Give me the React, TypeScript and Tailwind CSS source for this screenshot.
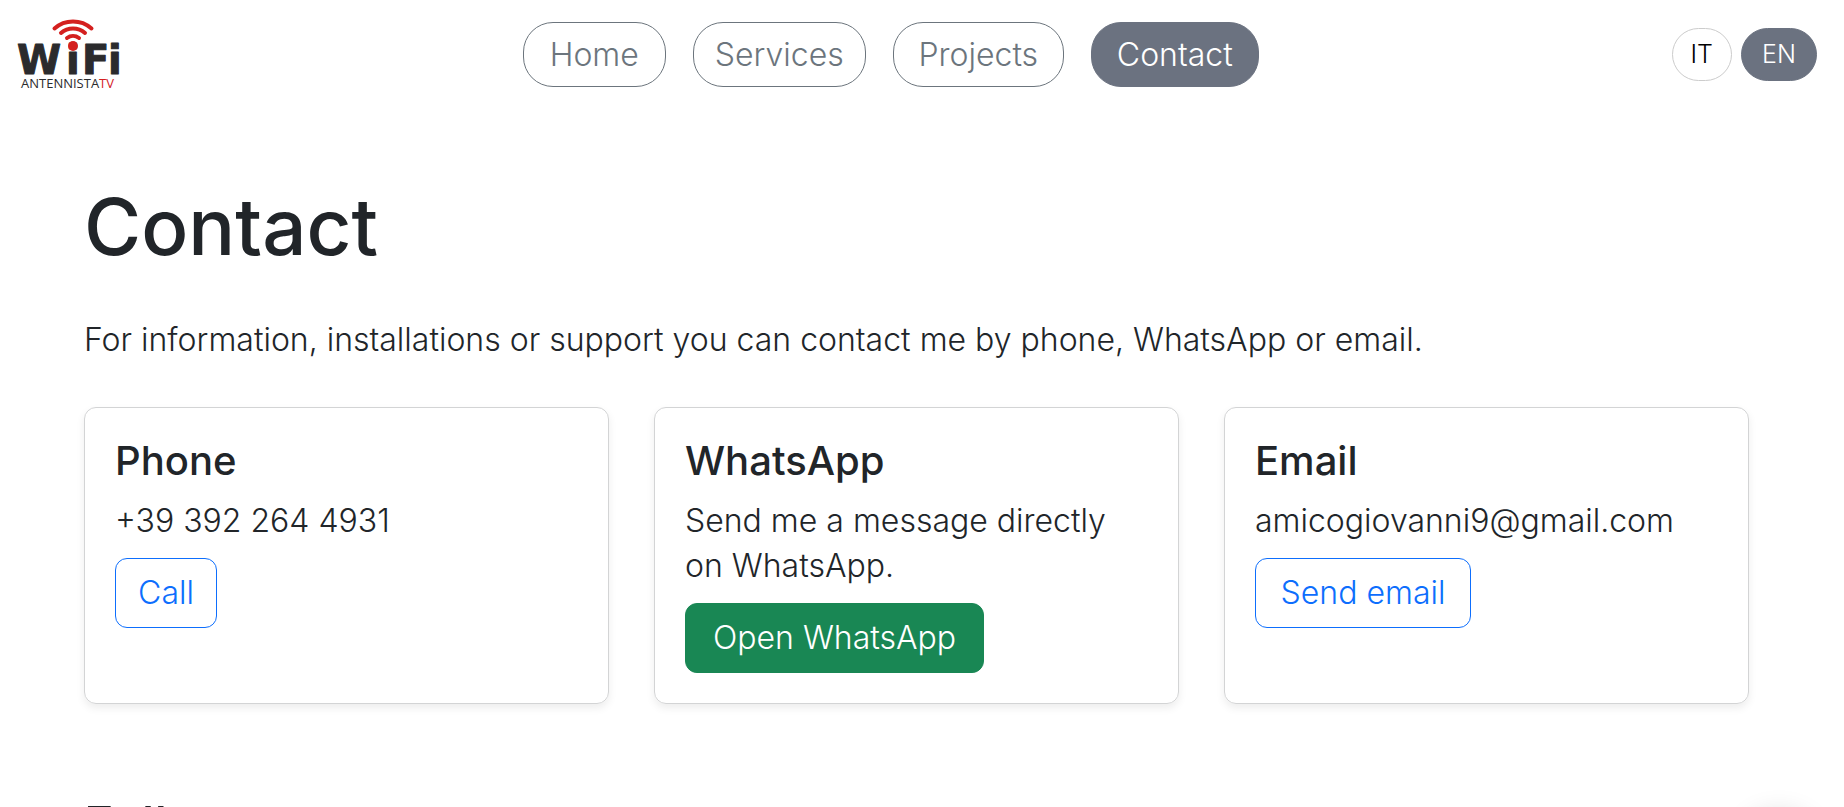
import React, { useState } from 'react';
import clsx from 'clsx';

interface ContactCard {
  title: string;
  text: string;
  action: string;
  href: string;
  buttonClass: string;
}

const navItems = [
  { label: 'Home', width: 'min-w-[143px]' },
  { label: 'Services', width: 'min-w-[173px]' },
  { label: 'Projects', width: 'min-w-[171px]' },
  { label: 'Contact', width: 'min-w-[168px]' }
];

const cards: ContactCard[] = [
  {
    title: 'Phone',
    text: '+39 392 264 4931',
    action: 'Call',
    href: 'tel:+393922644931',
    buttonClass: 'min-w-[102px] border-[#0d6efd] text-[#0d6efd]'
  },
  {
    title: 'WhatsApp',
    text: 'Send me a message directly on WhatsApp.',
    action: 'Open WhatsApp',
    href: 'https://wa.me/393922644931',
    buttonClass: 'min-w-[299px] border-[#198754] bg-[#198754] text-white'
  },
  {
    title: 'Email',
    text: 'amicogiovanni9@gmail.com',
    action: 'Send email',
    href: 'mailto:amicogiovanni9@gmail.com',
    buttonClass: 'min-w-[216px] border-[#0d6efd] text-[#0d6efd]'
  }
];

const Logo = () => (
  <svg viewBox="0 0 104 75" className="w-[104px] h-[75px]" role="img" aria-label="WiFi AntennistaTV">
    <g fill="none" stroke="#d4201f" strokeWidth="4" strokeLinecap="round">
      <path d="M38.500 11.500 A28 28 0 0 1 75.500 11.500" />
      <path d="M45 16 A18 18 0 0 1 69 16" />
      <path d="M51 21 A10 10 0 0 1 63 21" />
    </g>
    <text
      x="1 50 66 92"
      y="57"
      fontSize="40"
      fontWeight="700"
      fill="#2b2b2d"
      stroke="#2b2b2d"
      strokeWidth="1"
      strokeLinejoin="round"
      className="font-['DejaVu_Sans',sans-serif]"
    >
      WiFi
    </text>
    {/* red dot on the first i */}
    <circle cx="57" cy="29" r="5" fill="#d4201f" />
    <text x="5" y="71" fontSize="13" fontWeight="400" fill="#2b2b2d" className="font-['Open_Sans',sans-serif]">
      ANTENNISTA<tspan fill="#d4201f">TV</tspan>
    </text>
  </svg>
);

const App = () => {
  const [page, setPage] = useState('Contact');
  const [lang, setLang] = useState('EN');

  return (
    <div className="h-screen overflow-hidden bg-white pr-[11px] font-['Inter',sans-serif] text-[32px] leading-[45px] font-light text-[#212529]">
      <header className="flex items-center justify-between pt-[17px] px-4">
        <a href="#home">
          <Logo />
        </a>
        <nav className="flex gap-[27px] pr-[10px]">
          {navItems.map((item) => (
            <button
              key={item.label}
              onClick={() => setPage(item.label)}
              className={clsx(
                'h-[65px] rounded-[30px] border text-center',
                item.width,
                page === item.label
                  ? 'border-[#6b7280] bg-[#6b7280] text-white'
                  : 'border-[#6c757d] text-[#6c757d]'
              )}
            >
              {item.label}
            </button>
          ))}
        </nav>
        <div className="flex gap-[9px] text-[25px] leading-[37px]">
          {['IT', 'EN'].map((code) => (
            <button
              key={code}
              onClick={() => setLang(code)}
              className={clsx(
                'h-[53px] rounded-[27px] border px-[18px]',
                lang === code
                  ? 'min-w-[76px] border-[#6b7280] bg-[#6b7280] text-white'
                  : 'min-w-[60px] border-[#cccccc] text-black'
              )}
            >
              {code}
            </button>
          ))}
        </div>
      </header>

      <main className="px-[84px] pt-[90px]">
        <h1 className="text-[78px] leading-[90px] font-medium">Contact</h1>
        <p className="mt-[45px]">
          For information, installations or support you can contact me by phone, WhatsApp or email.
        </p>

        <div className="mt-[45px] grid grid-cols-3 gap-[45px]">
          {cards.map((card) => (
            <section
              key={card.title}
              className="rounded-xl border border-[#d3d4d5] p-[30px] shadow-[0_4px_8px_rgba(0,0,0,0.075)]"
            >
              <h2 className="mb-[15px] text-[40px] leading-[45px] font-medium">{card.title}</h2>
              <p className="mb-[15px]">{card.text}</p>
              <a
                href={card.href}
                className={clsx('inline-block rounded-xl border py-3 text-center leading-[44px]', card.buttonClass)}
              >
                {card.action}
              </a>
            </section>
          ))}
        </div>

        <h2 className="mt-[90px] text-[50px] leading-[60px] font-medium">Follow</h2>
      </main>

      <div className="fixed right-[30px] -bottom-[76px] size-[70px] rounded-full bg-white shadow-[0_4px_30px_rgba(0,0,0,0.2)]" />
    </div>
  );
};

export default App;
